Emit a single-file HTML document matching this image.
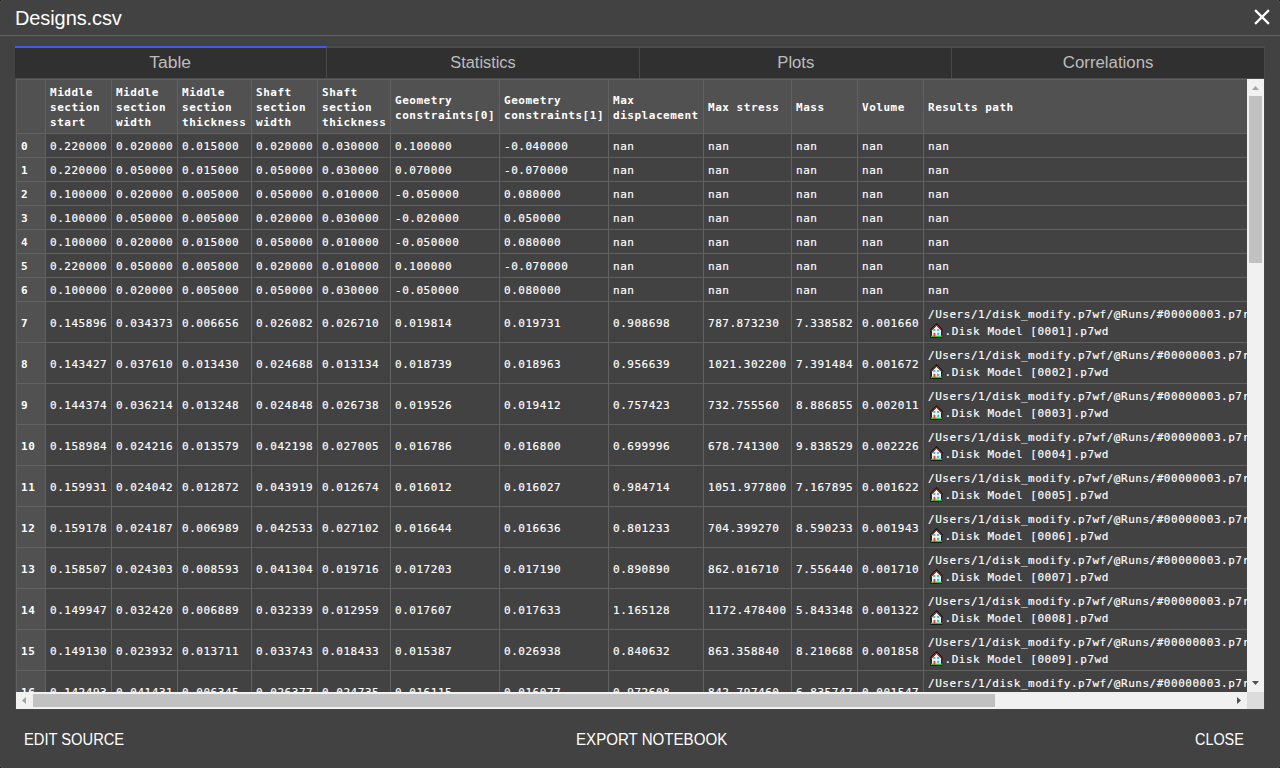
<!DOCTYPE html>
<html><head><meta charset="utf-8"><title>Designs.csv</title>
<style>
html,body{margin:0;padding:0;width:1280px;height:768px;overflow:hidden;background:#141414;}
body{font-family:"Liberation Sans","DejaVu Sans",sans-serif;color:#fff;position:relative;}
.dlg{position:absolute;left:0;top:0;width:1280px;height:768px;background:#424242;border-radius:2px;overflow:hidden;}
.title{position:absolute;left:15px;top:4px;letter-spacing:-0.1px;font-size:20px;line-height:28px;color:#fff;white-space:nowrap;}
.hline{position:absolute;left:0;top:35px;width:1280px;height:1px;background:#616161;}
.x{position:absolute;left:1254px;top:9px;width:16px;height:16px;}
.tabs{position:absolute;left:15px;top:46px;width:1250px;height:32px;background:#303030;}
.tab{position:absolute;top:0;height:32px;box-sizing:border-box;border-top:2px solid #4a4a4a;border-right:1px solid #4a4a4a;padding-left:1px;font-size:16px;line-height:30px;text-align:center;color:#bdbdbd;}
.tab span,.btn span{display:inline-block;transform-origin:50% 50%;}
.btn.l span{transform-origin:0 50%;}.btn.r span{transform-origin:100% 50%;}
.tab.act{border-top-color:#3d5afe;}
.view{position:absolute;left:16px;top:79px;width:1231px;height:613px;overflow:hidden;background:#424242;}
table.grid{border-collapse:separate;border-spacing:0;table-layout:fixed;width:1308px;font-family:"DejaVu Sans Mono","Liberation Mono",monospace;font-size:11px;letter-spacing:0.525px;line-height:15px;color:#fff;border-top:1px solid #616161;}
.grid th,.grid td{box-sizing:border-box;padding:5px 4px 3px 4px;border-right:1px solid #616161;border-bottom:1px solid #616161;text-align:left;vertical-align:middle;white-space:nowrap;overflow:hidden;font-weight:normal;}
.grid td{-webkit-text-stroke:0.15px #fff;}
.grid th{background:#515151;font-weight:bold;}
.grid tr>th:first-child{border-left:1px solid #616161;}
.grid thead th{height:54px;}
.grid tr.r1 td,.grid tr.r1 th{height:24px;}
.grid tr.r2 td,.grid tr.r2 th{height:41px;}
.l1{height:15px;line-height:15px;}
.l2{height:17px;line-height:19px;position:relative;}
.hs{position:absolute;left:2px;top:1px;}
.dm{padding-left:16.5px;}
.vsb{position:absolute;left:1247px;top:79px;width:17px;height:613px;background:#f1f1f1;}
.hsb{position:absolute;left:16px;top:692px;width:1231px;height:17px;background:#f1f1f1;}
.corner{position:absolute;left:1247px;top:692px;width:17px;height:17px;background:#dcdcdc;}
.thumb{position:absolute;background:#c1c1c1;}
.arr{position:absolute;width:0;height:0;}
.cp{position:absolute;width:1px;height:1px;background:#606060;}
.btn{position:absolute;top:729px;font-size:16px;line-height:22px;color:#fff;white-space:nowrap;}
</style></head>
<body>
<div class="dlg">
<div class="title">Designs.csv</div>
<svg class="x" viewBox="0 0 16 16"><path d="M1.1 1.1 L14.9 14.9 M14.9 1.1 L1.1 14.9" stroke="#fff" stroke-width="2.2" fill="none"/></svg>
<div class="hline"></div>
<div class="tabs">
<div class="tab act" style="left:0;width:312px;padding-left:0;"><span style="transform:scaleX(1.09)">Table</span></div>
<div class="tab" style="left:312px;width:313px;"><span style="transform:scaleX(1.02)">Statistics</span></div>
<div class="tab" style="left:625px;width:312px;"><span style="transform:scaleX(1.04)">Plots</span></div>
<div class="tab" style="left:937px;width:313px;"><span style="transform:scaleX(1.05)">Correlations</span></div>
</div>
<div style="position:absolute;left:15px;top:78px;width:1250px;height:1px;background:#4c4c4c"></div><div style="position:absolute;left:1264px;top:78px;width:1px;height:632px;background:#484848"></div><div style="position:absolute;left:15px;top:709px;width:1250px;height:1px;background:#474747"></div><div style="position:absolute;left:15px;top:78px;width:1px;height:631px;background:#494949"></div>
<div class="view"><table class="grid"><colgroup><col style="width:30px"><col style="width:66px"><col style="width:66px"><col style="width:74px"><col style="width:66px"><col style="width:73px"><col style="width:109px"><col style="width:109px"><col style="width:95px"><col style="width:88px"><col style="width:66px"><col style="width:66px"><col style="width:400px"></colgroup><thead><tr><th></th><th>Middle<br>section<br>start</th><th>Middle<br>section<br>width</th><th>Middle<br>section<br>thickness</th><th>Shaft<br>section<br>width</th><th>Shaft<br>section<br>thickness</th><th>Geometry<br>constraints[0]</th><th>Geometry<br>constraints[1]</th><th>Max<br>displacement</th><th>Max stress</th><th>Mass</th><th>Volume</th><th>Results path</th></tr></thead><tbody><tr class="r1"><th>0</th><td>0.220000</td><td>0.020000</td><td>0.015000</td><td>0.020000</td><td>0.030000</td><td>0.100000</td><td>-0.040000</td><td>nan</td><td>nan</td><td>nan</td><td>nan</td><td>nan</td></tr><tr class="r1"><th>1</th><td>0.220000</td><td>0.050000</td><td>0.015000</td><td>0.050000</td><td>0.030000</td><td>0.070000</td><td>-0.070000</td><td>nan</td><td>nan</td><td>nan</td><td>nan</td><td>nan</td></tr><tr class="r1"><th>2</th><td>0.100000</td><td>0.020000</td><td>0.005000</td><td>0.050000</td><td>0.010000</td><td>-0.050000</td><td>0.080000</td><td>nan</td><td>nan</td><td>nan</td><td>nan</td><td>nan</td></tr><tr class="r1"><th>3</th><td>0.100000</td><td>0.050000</td><td>0.005000</td><td>0.020000</td><td>0.030000</td><td>-0.020000</td><td>0.050000</td><td>nan</td><td>nan</td><td>nan</td><td>nan</td><td>nan</td></tr><tr class="r1"><th>4</th><td>0.100000</td><td>0.020000</td><td>0.015000</td><td>0.050000</td><td>0.010000</td><td>-0.050000</td><td>0.080000</td><td>nan</td><td>nan</td><td>nan</td><td>nan</td><td>nan</td></tr><tr class="r1"><th>5</th><td>0.220000</td><td>0.050000</td><td>0.005000</td><td>0.020000</td><td>0.010000</td><td>0.100000</td><td>-0.070000</td><td>nan</td><td>nan</td><td>nan</td><td>nan</td><td>nan</td></tr><tr class="r1"><th>6</th><td>0.100000</td><td>0.020000</td><td>0.005000</td><td>0.050000</td><td>0.030000</td><td>-0.050000</td><td>0.080000</td><td>nan</td><td>nan</td><td>nan</td><td>nan</td><td>nan</td></tr><tr class="r2"><th>7</th><td>0.145896</td><td>0.034373</td><td>0.006656</td><td>0.026082</td><td>0.026710</td><td>0.019814</td><td>0.019731</td><td>0.908698</td><td>787.873230</td><td>7.338582</td><td>0.001660</td><td class="pp"><div class="l1">/Users/1/disk_modify.p7wf/@Runs/#00000003.p7run/</div><div class="l2"><svg class="hs" viewBox="0 0 13 15" width="13" height="15"><path d="M6.5 0 L13 6.7 L13 8.3 L12.1 8.3 L12.1 15 L0.5 15 L0.5 8.3 L0 8.3 L0 6.7 Z" fill="#0c0c0c"/><path d="M1.9 7.6 L6.5 2.8 L11.1 7.6 L11.1 13.2 L1.9 13.2 Z" fill="#f4f4f4"/><path d="M0.9 7.6 L6.5 1.8 L12.1 7.6" fill="none" stroke="#f2452c" stroke-width="0.85"/><rect x="0.9" y="12.6" width="11" height="1.5" fill="#2fc52f"/><rect x="3.2" y="5.9" width="2.2" height="2.1" rx="0.4" fill="#2ec4f1"/><rect x="7" y="5.9" width="2.2" height="2.1" rx="0.4" fill="#2ec4f1"/><rect x="7" y="9.8" width="2.2" height="2.1" rx="0.4" fill="#2ec4f1"/><rect x="3.5" y="9.8" width="1.9" height="3.9" rx="0.6" fill="#f0402a"/></svg><span class="dm">.Disk Model [0001].p7wd</span></div></td></tr><tr class="r2"><th>8</th><td>0.143427</td><td>0.037610</td><td>0.013430</td><td>0.024688</td><td>0.013134</td><td>0.018739</td><td>0.018963</td><td>0.956639</td><td>1021.302200</td><td>7.391484</td><td>0.001672</td><td class="pp"><div class="l1">/Users/1/disk_modify.p7wf/@Runs/#00000003.p7run/</div><div class="l2"><svg class="hs" viewBox="0 0 13 15" width="13" height="15"><path d="M6.5 0 L13 6.7 L13 8.3 L12.1 8.3 L12.1 15 L0.5 15 L0.5 8.3 L0 8.3 L0 6.7 Z" fill="#0c0c0c"/><path d="M1.9 7.6 L6.5 2.8 L11.1 7.6 L11.1 13.2 L1.9 13.2 Z" fill="#f4f4f4"/><path d="M0.9 7.6 L6.5 1.8 L12.1 7.6" fill="none" stroke="#f2452c" stroke-width="0.85"/><rect x="0.9" y="12.6" width="11" height="1.5" fill="#2fc52f"/><rect x="3.2" y="5.9" width="2.2" height="2.1" rx="0.4" fill="#2ec4f1"/><rect x="7" y="5.9" width="2.2" height="2.1" rx="0.4" fill="#2ec4f1"/><rect x="7" y="9.8" width="2.2" height="2.1" rx="0.4" fill="#2ec4f1"/><rect x="3.5" y="9.8" width="1.9" height="3.9" rx="0.6" fill="#f0402a"/></svg><span class="dm">.Disk Model [0002].p7wd</span></div></td></tr><tr class="r2"><th>9</th><td>0.144374</td><td>0.036214</td><td>0.013248</td><td>0.024848</td><td>0.026738</td><td>0.019526</td><td>0.019412</td><td>0.757423</td><td>732.755560</td><td>8.886855</td><td>0.002011</td><td class="pp"><div class="l1">/Users/1/disk_modify.p7wf/@Runs/#00000003.p7run/</div><div class="l2"><svg class="hs" viewBox="0 0 13 15" width="13" height="15"><path d="M6.5 0 L13 6.7 L13 8.3 L12.1 8.3 L12.1 15 L0.5 15 L0.5 8.3 L0 8.3 L0 6.7 Z" fill="#0c0c0c"/><path d="M1.9 7.6 L6.5 2.8 L11.1 7.6 L11.1 13.2 L1.9 13.2 Z" fill="#f4f4f4"/><path d="M0.9 7.6 L6.5 1.8 L12.1 7.6" fill="none" stroke="#f2452c" stroke-width="0.85"/><rect x="0.9" y="12.6" width="11" height="1.5" fill="#2fc52f"/><rect x="3.2" y="5.9" width="2.2" height="2.1" rx="0.4" fill="#2ec4f1"/><rect x="7" y="5.9" width="2.2" height="2.1" rx="0.4" fill="#2ec4f1"/><rect x="7" y="9.8" width="2.2" height="2.1" rx="0.4" fill="#2ec4f1"/><rect x="3.5" y="9.8" width="1.9" height="3.9" rx="0.6" fill="#f0402a"/></svg><span class="dm">.Disk Model [0003].p7wd</span></div></td></tr><tr class="r2"><th>10</th><td>0.158984</td><td>0.024216</td><td>0.013579</td><td>0.042198</td><td>0.027005</td><td>0.016786</td><td>0.016800</td><td>0.699996</td><td>678.741300</td><td>9.838529</td><td>0.002226</td><td class="pp"><div class="l1">/Users/1/disk_modify.p7wf/@Runs/#00000003.p7run/</div><div class="l2"><svg class="hs" viewBox="0 0 13 15" width="13" height="15"><path d="M6.5 0 L13 6.7 L13 8.3 L12.1 8.3 L12.1 15 L0.5 15 L0.5 8.3 L0 8.3 L0 6.7 Z" fill="#0c0c0c"/><path d="M1.9 7.6 L6.5 2.8 L11.1 7.6 L11.1 13.2 L1.9 13.2 Z" fill="#f4f4f4"/><path d="M0.9 7.6 L6.5 1.8 L12.1 7.6" fill="none" stroke="#f2452c" stroke-width="0.85"/><rect x="0.9" y="12.6" width="11" height="1.5" fill="#2fc52f"/><rect x="3.2" y="5.9" width="2.2" height="2.1" rx="0.4" fill="#2ec4f1"/><rect x="7" y="5.9" width="2.2" height="2.1" rx="0.4" fill="#2ec4f1"/><rect x="7" y="9.8" width="2.2" height="2.1" rx="0.4" fill="#2ec4f1"/><rect x="3.5" y="9.8" width="1.9" height="3.9" rx="0.6" fill="#f0402a"/></svg><span class="dm">.Disk Model [0004].p7wd</span></div></td></tr><tr class="r2"><th>11</th><td>0.159931</td><td>0.024042</td><td>0.012872</td><td>0.043919</td><td>0.012674</td><td>0.016012</td><td>0.016027</td><td>0.984714</td><td>1051.977800</td><td>7.167895</td><td>0.001622</td><td class="pp"><div class="l1">/Users/1/disk_modify.p7wf/@Runs/#00000003.p7run/</div><div class="l2"><svg class="hs" viewBox="0 0 13 15" width="13" height="15"><path d="M6.5 0 L13 6.7 L13 8.3 L12.1 8.3 L12.1 15 L0.5 15 L0.5 8.3 L0 8.3 L0 6.7 Z" fill="#0c0c0c"/><path d="M1.9 7.6 L6.5 2.8 L11.1 7.6 L11.1 13.2 L1.9 13.2 Z" fill="#f4f4f4"/><path d="M0.9 7.6 L6.5 1.8 L12.1 7.6" fill="none" stroke="#f2452c" stroke-width="0.85"/><rect x="0.9" y="12.6" width="11" height="1.5" fill="#2fc52f"/><rect x="3.2" y="5.9" width="2.2" height="2.1" rx="0.4" fill="#2ec4f1"/><rect x="7" y="5.9" width="2.2" height="2.1" rx="0.4" fill="#2ec4f1"/><rect x="7" y="9.8" width="2.2" height="2.1" rx="0.4" fill="#2ec4f1"/><rect x="3.5" y="9.8" width="1.9" height="3.9" rx="0.6" fill="#f0402a"/></svg><span class="dm">.Disk Model [0005].p7wd</span></div></td></tr><tr class="r2"><th>12</th><td>0.159178</td><td>0.024187</td><td>0.006989</td><td>0.042533</td><td>0.027102</td><td>0.016644</td><td>0.016636</td><td>0.801233</td><td>704.399270</td><td>8.590233</td><td>0.001943</td><td class="pp"><div class="l1">/Users/1/disk_modify.p7wf/@Runs/#00000003.p7run/</div><div class="l2"><svg class="hs" viewBox="0 0 13 15" width="13" height="15"><path d="M6.5 0 L13 6.7 L13 8.3 L12.1 8.3 L12.1 15 L0.5 15 L0.5 8.3 L0 8.3 L0 6.7 Z" fill="#0c0c0c"/><path d="M1.9 7.6 L6.5 2.8 L11.1 7.6 L11.1 13.2 L1.9 13.2 Z" fill="#f4f4f4"/><path d="M0.9 7.6 L6.5 1.8 L12.1 7.6" fill="none" stroke="#f2452c" stroke-width="0.85"/><rect x="0.9" y="12.6" width="11" height="1.5" fill="#2fc52f"/><rect x="3.2" y="5.9" width="2.2" height="2.1" rx="0.4" fill="#2ec4f1"/><rect x="7" y="5.9" width="2.2" height="2.1" rx="0.4" fill="#2ec4f1"/><rect x="7" y="9.8" width="2.2" height="2.1" rx="0.4" fill="#2ec4f1"/><rect x="3.5" y="9.8" width="1.9" height="3.9" rx="0.6" fill="#f0402a"/></svg><span class="dm">.Disk Model [0006].p7wd</span></div></td></tr><tr class="r2"><th>13</th><td>0.158507</td><td>0.024303</td><td>0.008593</td><td>0.041304</td><td>0.019716</td><td>0.017203</td><td>0.017190</td><td>0.890890</td><td>862.016710</td><td>7.556440</td><td>0.001710</td><td class="pp"><div class="l1">/Users/1/disk_modify.p7wf/@Runs/#00000003.p7run/</div><div class="l2"><svg class="hs" viewBox="0 0 13 15" width="13" height="15"><path d="M6.5 0 L13 6.7 L13 8.3 L12.1 8.3 L12.1 15 L0.5 15 L0.5 8.3 L0 8.3 L0 6.7 Z" fill="#0c0c0c"/><path d="M1.9 7.6 L6.5 2.8 L11.1 7.6 L11.1 13.2 L1.9 13.2 Z" fill="#f4f4f4"/><path d="M0.9 7.6 L6.5 1.8 L12.1 7.6" fill="none" stroke="#f2452c" stroke-width="0.85"/><rect x="0.9" y="12.6" width="11" height="1.5" fill="#2fc52f"/><rect x="3.2" y="5.9" width="2.2" height="2.1" rx="0.4" fill="#2ec4f1"/><rect x="7" y="5.9" width="2.2" height="2.1" rx="0.4" fill="#2ec4f1"/><rect x="7" y="9.8" width="2.2" height="2.1" rx="0.4" fill="#2ec4f1"/><rect x="3.5" y="9.8" width="1.9" height="3.9" rx="0.6" fill="#f0402a"/></svg><span class="dm">.Disk Model [0007].p7wd</span></div></td></tr><tr class="r2"><th>14</th><td>0.149947</td><td>0.032420</td><td>0.006889</td><td>0.032339</td><td>0.012959</td><td>0.017607</td><td>0.017633</td><td>1.165128</td><td>1172.478400</td><td>5.843348</td><td>0.001322</td><td class="pp"><div class="l1">/Users/1/disk_modify.p7wf/@Runs/#00000003.p7run/</div><div class="l2"><svg class="hs" viewBox="0 0 13 15" width="13" height="15"><path d="M6.5 0 L13 6.7 L13 8.3 L12.1 8.3 L12.1 15 L0.5 15 L0.5 8.3 L0 8.3 L0 6.7 Z" fill="#0c0c0c"/><path d="M1.9 7.6 L6.5 2.8 L11.1 7.6 L11.1 13.2 L1.9 13.2 Z" fill="#f4f4f4"/><path d="M0.9 7.6 L6.5 1.8 L12.1 7.6" fill="none" stroke="#f2452c" stroke-width="0.85"/><rect x="0.9" y="12.6" width="11" height="1.5" fill="#2fc52f"/><rect x="3.2" y="5.9" width="2.2" height="2.1" rx="0.4" fill="#2ec4f1"/><rect x="7" y="5.9" width="2.2" height="2.1" rx="0.4" fill="#2ec4f1"/><rect x="7" y="9.8" width="2.2" height="2.1" rx="0.4" fill="#2ec4f1"/><rect x="3.5" y="9.8" width="1.9" height="3.9" rx="0.6" fill="#f0402a"/></svg><span class="dm">.Disk Model [0008].p7wd</span></div></td></tr><tr class="r2"><th>15</th><td>0.149130</td><td>0.023932</td><td>0.013711</td><td>0.033743</td><td>0.018433</td><td>0.015387</td><td>0.026938</td><td>0.840632</td><td>863.358840</td><td>8.210688</td><td>0.001858</td><td class="pp"><div class="l1">/Users/1/disk_modify.p7wf/@Runs/#00000003.p7run/</div><div class="l2"><svg class="hs" viewBox="0 0 13 15" width="13" height="15"><path d="M6.5 0 L13 6.7 L13 8.3 L12.1 8.3 L12.1 15 L0.5 15 L0.5 8.3 L0 8.3 L0 6.7 Z" fill="#0c0c0c"/><path d="M1.9 7.6 L6.5 2.8 L11.1 7.6 L11.1 13.2 L1.9 13.2 Z" fill="#f4f4f4"/><path d="M0.9 7.6 L6.5 1.8 L12.1 7.6" fill="none" stroke="#f2452c" stroke-width="0.85"/><rect x="0.9" y="12.6" width="11" height="1.5" fill="#2fc52f"/><rect x="3.2" y="5.9" width="2.2" height="2.1" rx="0.4" fill="#2ec4f1"/><rect x="7" y="5.9" width="2.2" height="2.1" rx="0.4" fill="#2ec4f1"/><rect x="7" y="9.8" width="2.2" height="2.1" rx="0.4" fill="#2ec4f1"/><rect x="3.5" y="9.8" width="1.9" height="3.9" rx="0.6" fill="#f0402a"/></svg><span class="dm">.Disk Model [0009].p7wd</span></div></td></tr><tr class="r2"><th>16</th><td>0.142493</td><td>0.041431</td><td>0.006345</td><td>0.026377</td><td>0.024735</td><td>0.016115</td><td>0.016077</td><td>0.972608</td><td>842.797460</td><td>6.835747</td><td>0.001547</td><td class="pp"><div class="l1">/Users/1/disk_modify.p7wf/@Runs/#00000003.p7run/</div><div class="l2"><svg class="hs" viewBox="0 0 13 15" width="13" height="15"><path d="M6.5 0 L13 6.7 L13 8.3 L12.1 8.3 L12.1 15 L0.5 15 L0.5 8.3 L0 8.3 L0 6.7 Z" fill="#0c0c0c"/><path d="M1.9 7.6 L6.5 2.8 L11.1 7.6 L11.1 13.2 L1.9 13.2 Z" fill="#f4f4f4"/><path d="M0.9 7.6 L6.5 1.8 L12.1 7.6" fill="none" stroke="#f2452c" stroke-width="0.85"/><rect x="0.9" y="12.6" width="11" height="1.5" fill="#2fc52f"/><rect x="3.2" y="5.9" width="2.2" height="2.1" rx="0.4" fill="#2ec4f1"/><rect x="7" y="5.9" width="2.2" height="2.1" rx="0.4" fill="#2ec4f1"/><rect x="7" y="9.8" width="2.2" height="2.1" rx="0.4" fill="#2ec4f1"/><rect x="3.5" y="9.8" width="1.9" height="3.9" rx="0.6" fill="#f0402a"/></svg><span class="dm">.Disk Model [0010].p7wd</span></div></td></tr></tbody></table></div>
<div class="vsb">
<svg style="position:absolute;left:0;top:0" width="17" height="613"><polygon points="5,11 8.5,7 12,11" fill="#a3a3a3"/><polygon points="5,602 8.5,606 12,602" fill="#505050"/></svg>
<div class="thumb" style="left:2px;top:17px;width:13px;height:167px;"></div>
</div>
<div class="hsb">
<svg style="position:absolute;left:0;top:0" width="1231" height="17"><polygon points="10,5 6,8.5 10,12" fill="#a3a3a3"/><polygon points="1221,5 1225,8.5 1221,12" fill="#505050"/></svg>
<div class="thumb" style="left:17px;top:2px;width:962px;height:13px;"></div>
</div>
<div class="corner"></div>
<div class="btn l" style="left:24px;"><span style="transform:scaleX(0.9185)">EDIT SOURCE</span></div>
<div class="btn l" style="left:576px;"><span style="transform:scaleX(0.943)">EXPORT NOTEBOOK</span></div>
<div class="btn l" style="left:1195px;"><span style="transform:scaleX(0.90)">CLOSE</span></div>
<div class="cp" style="left:2px;top:0"></div><div class="cp" style="left:0;top:2px"></div><div class="cp" style="left:1277px;top:0"></div><div class="cp" style="left:1279px;top:2px"></div><div class="cp" style="left:2px;top:767px"></div><div class="cp" style="left:0;top:765px"></div><div class="cp" style="left:1277px;top:767px"></div><div class="cp" style="left:1279px;top:765px"></div>
</div>
</body></html>
